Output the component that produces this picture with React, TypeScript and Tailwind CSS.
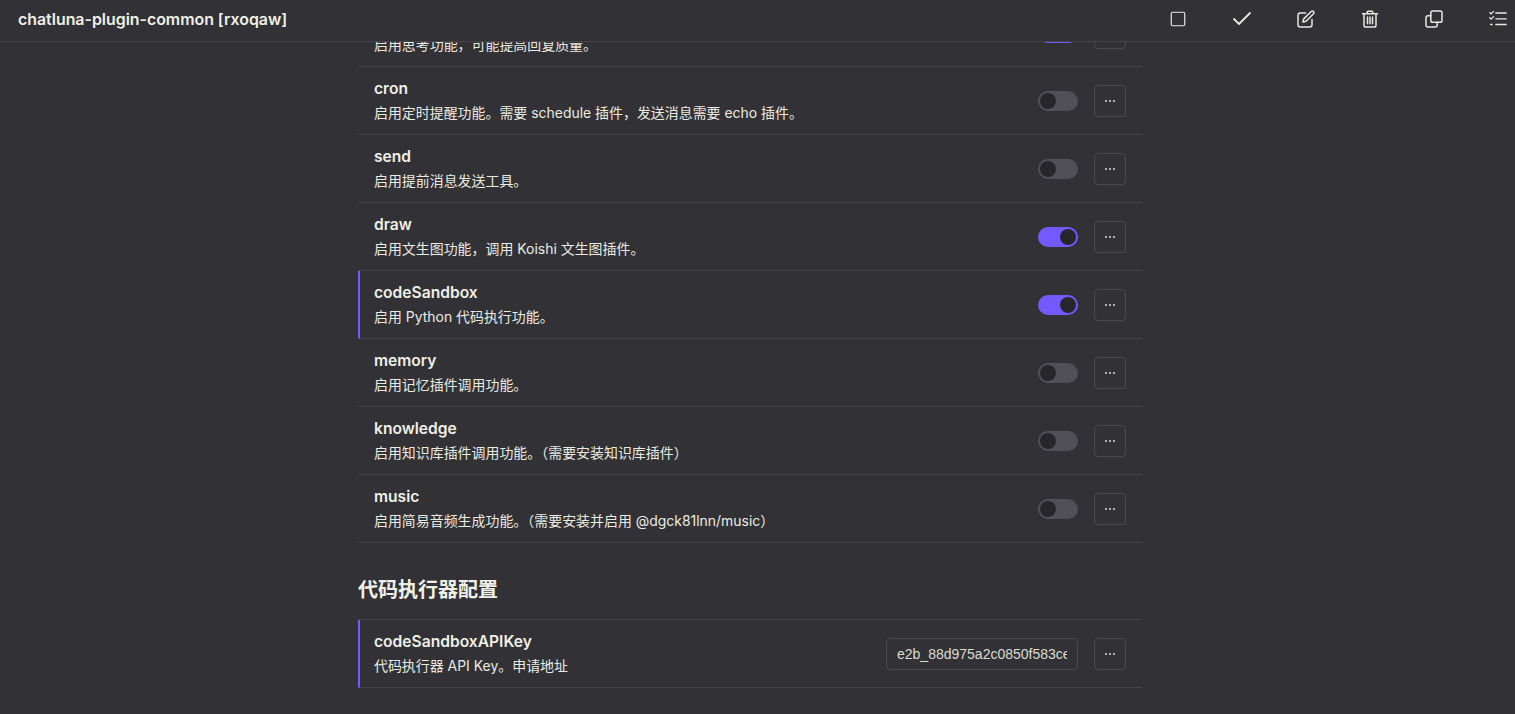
import { Check, Square } from 'lucide-react';

const FONT = "font-['Inter','Noto_Sans_CJK_SC',sans-serif]";

interface OptionRow {
  name: string;
  desc: string;
  on?: boolean;
  changed?: boolean;
}

const rows: OptionRow[] = [
  { name: 'think', desc: '启用思考功能，可能提高回复质量。', on: true },
  { name: 'cron', desc: '启用定时提醒功能。需要 schedule 插件，发送消息需要 echo 插件。' },
  { name: 'send', desc: '启用提前消息发送工具。' },
  { name: 'draw', desc: '启用文生图功能，调用 Koishi 文生图插件。', on: true },
  { name: 'codeSandbox', desc: '启用 Python 代码执行功能。', on: true, changed: true },
  { name: 'memory', desc: '启用记忆插件调用功能。' },
  { name: 'knowledge', desc: '启用知识库插件调用功能。（需要安装知识库插件）' },
  { name: 'music', desc: '启用简易音频生成功能。（需要安装并启用 @dgck81lnn/music）' },
];

function PenIcon() {
  return (
    <svg width="18" height="18" viewBox="0 0 18 18" fill="none" stroke="currentColor" strokeWidth="1.5" strokeLinecap="round" strokeLinejoin="round">
      <path d="M8.6 3H3.2C1.9 3 1 3.9 1 5.2v9.6C1 16.1 1.9 17 3.2 17h9.6c1.300 0 2.200-.9 2.200-2.200V9.400" />
      <path d="M14.200 1.500c.7-.7 1.700-.7 2.300 0 .6.600.6 1.600 0 2.200l-7.400 7.500-3.200.8.800-3.100z" />
    </svg>
  );
}

function TrashIcon() {
  return (
    <svg width="18" height="18" viewBox="0 0 18 18" fill="none" stroke="currentColor" strokeWidth="1.5" strokeLinecap="round" strokeLinejoin="round">
      <path d="M1.500 3.800h15" />
      <path d="M6.200 3.600V2.300c0-.6.400-1 1-1h3.600c.6 0 1 .4 1 1v1.300" />
      <path d="M3 3.800v11.400c0 1.100.7 1.800 1.800 1.800h8.400c1.100 0 1.800-.7 1.800-1.800V3.800" />
      <path d="M6.500 7v6.800M9 7v6.800M11.500 7v6.800" />
    </svg>
  );
}

function CopyIcon() {
  return (
    <svg width="18" height="18" viewBox="0 0 18 18" fill="none" stroke="currentColor" strokeWidth="1.5" strokeLinecap="round" strokeLinejoin="round">
      <rect x="5.800" y="1" width="11.200" height="11.200" rx="1.800" />
      <path d="M5.800 5.800H3C1.800 5.800 1 6.600 1 7.800V15c0 1.200.8 2 2 2h7.200c1.200 0 2-.8 2-2v-2.800" />
    </svg>
  );
}

function ChecklistIcon() {
  return (
    <svg width="18" height="18" viewBox="0 0 18 18" fill="none" stroke="currentColor" strokeWidth="1.300" strokeLinecap="round" strokeLinejoin="round">
      <path d="M.8 2.600l1.400 1.300L4.600 1.400" />
      <path d="M.8 7.800l1.400 1.300 2.400-2.500" />
      <path d="M1.600 14.500h1.600" />
      <path d="M6.800 3h10.400M6.800 8.800h10.400M6.800 14.500h10.400" />
    </svg>
  );
}

function Toggle({ on }: { on?: boolean }) {
  return (
    <div
      className={`flex h-5 w-10 items-center rounded-full border-2 ${
        on ? 'justify-end border-[#7459ff] bg-[#7459ff]' : 'justify-start border-[#505056] bg-[#505056]'
      }`}
    >
      <div className="h-4 w-4 rounded-full bg-[#26262b]" />
    </div>
  );
}

function MoreButton() {
  return (
    <div className="flex h-8 w-8 shrink-0 items-center justify-center rounded border border-[#49494e] text-[#dcdcd2]">
      <svg width="12" height="2" viewBox="0 0 12 2" fill="currentColor">
        <rect x="1" y="0" width="2" height="2" opacity="0.75" />
        <rect x="5" y="0" width="2" height="2" opacity="0.75" />
        <rect x="9" y="0" width="2" height="2" opacity="0.75" />
      </svg>
    </div>
  );
}

function Row({ name, desc, changed, children }: { name: string; desc: string; changed?: boolean; children: React.ReactNode }) {
  return (
    <div className={`flex h-[68px] items-center justify-between border-b border-[#44444a] pr-4 ${changed ? 'border-l-2 border-l-[#7459ff] pl-[14px]' : 'pl-4'}`}>
      <div>
        <div className="text-[15.6px] leading-[21px] font-semibold text-[#f0f0e6]">{name}</div>
        <div className="mt-[4px] text-[13.95px] leading-[20px] text-[#ebebe1]">{desc}</div>
      </div>
      <div className="flex items-center gap-4">{children}</div>
    </div>
  );
}

export default function App() {
  return (
    <div className={`flex h-[714px] flex-col overflow-hidden bg-[#313136] ${FONT}`}>
      {/* Header */}
      <div className="z-10 flex h-[42px] shrink-0 items-center justify-between border-b border-[#44444a] bg-[#313136] pb-1 pl-[18px]">
        <h1 className="mt-0.5 text-[15.9px] font-semibold text-[#f0f0e6]">chatluna-plugin-common [rxoqaw]</h1>
        <div className="flex items-center text-[#e8e8de]">
          <span className="flex w-16 justify-center"><Square size={18} strokeWidth={1.6} /></span>
          <span className="flex w-16 justify-center"><Check size={24} strokeWidth={1.8} /></span>
          <span className="flex w-16 justify-center"><PenIcon /></span>
          <span className="flex w-16 justify-center"><TrashIcon /></span>
          <span className="flex w-16 justify-center"><CopyIcon /></span>
          <span className="flex w-[49px] pl-[23px]"><ChecklistIcon /></span>
        </div>
      </div>

      {/* Scrolled form content */}
      <div className="flex-1 overflow-hidden">
        <div className="ml-[358px] mt-[-43px] w-[784px]">
          {rows.map((row) => (
            <Row key={row.name} name={row.name} desc={row.desc} changed={row.changed}>
              <Toggle on={row.on} />
              <MoreButton />
            </Row>
          ))}

          <h2 className="mt-[32px] mb-[14px] h-[30px] text-[20px] leading-[30px] font-semibold text-[#f0f0e6]">代码执行器配置</h2>
          <div className="border-t border-[#44444a]">
            <Row name="codeSandboxAPIKey" desc="代码执行器 API Key。申请地址" changed>
              <input
                readOnly
                value="e2b_88d975a2c0850f583ce1a4b7d6"
                className="h-8 w-[192px] rounded border border-[#49494e] bg-transparent px-[10px] font-['Liberation_Sans',sans-serif] text-[14px] text-[#dcdcd2] outline-none"
              />
              <MoreButton />
            </Row>
          </div>
        </div>
      </div>
    </div>
  );
}
